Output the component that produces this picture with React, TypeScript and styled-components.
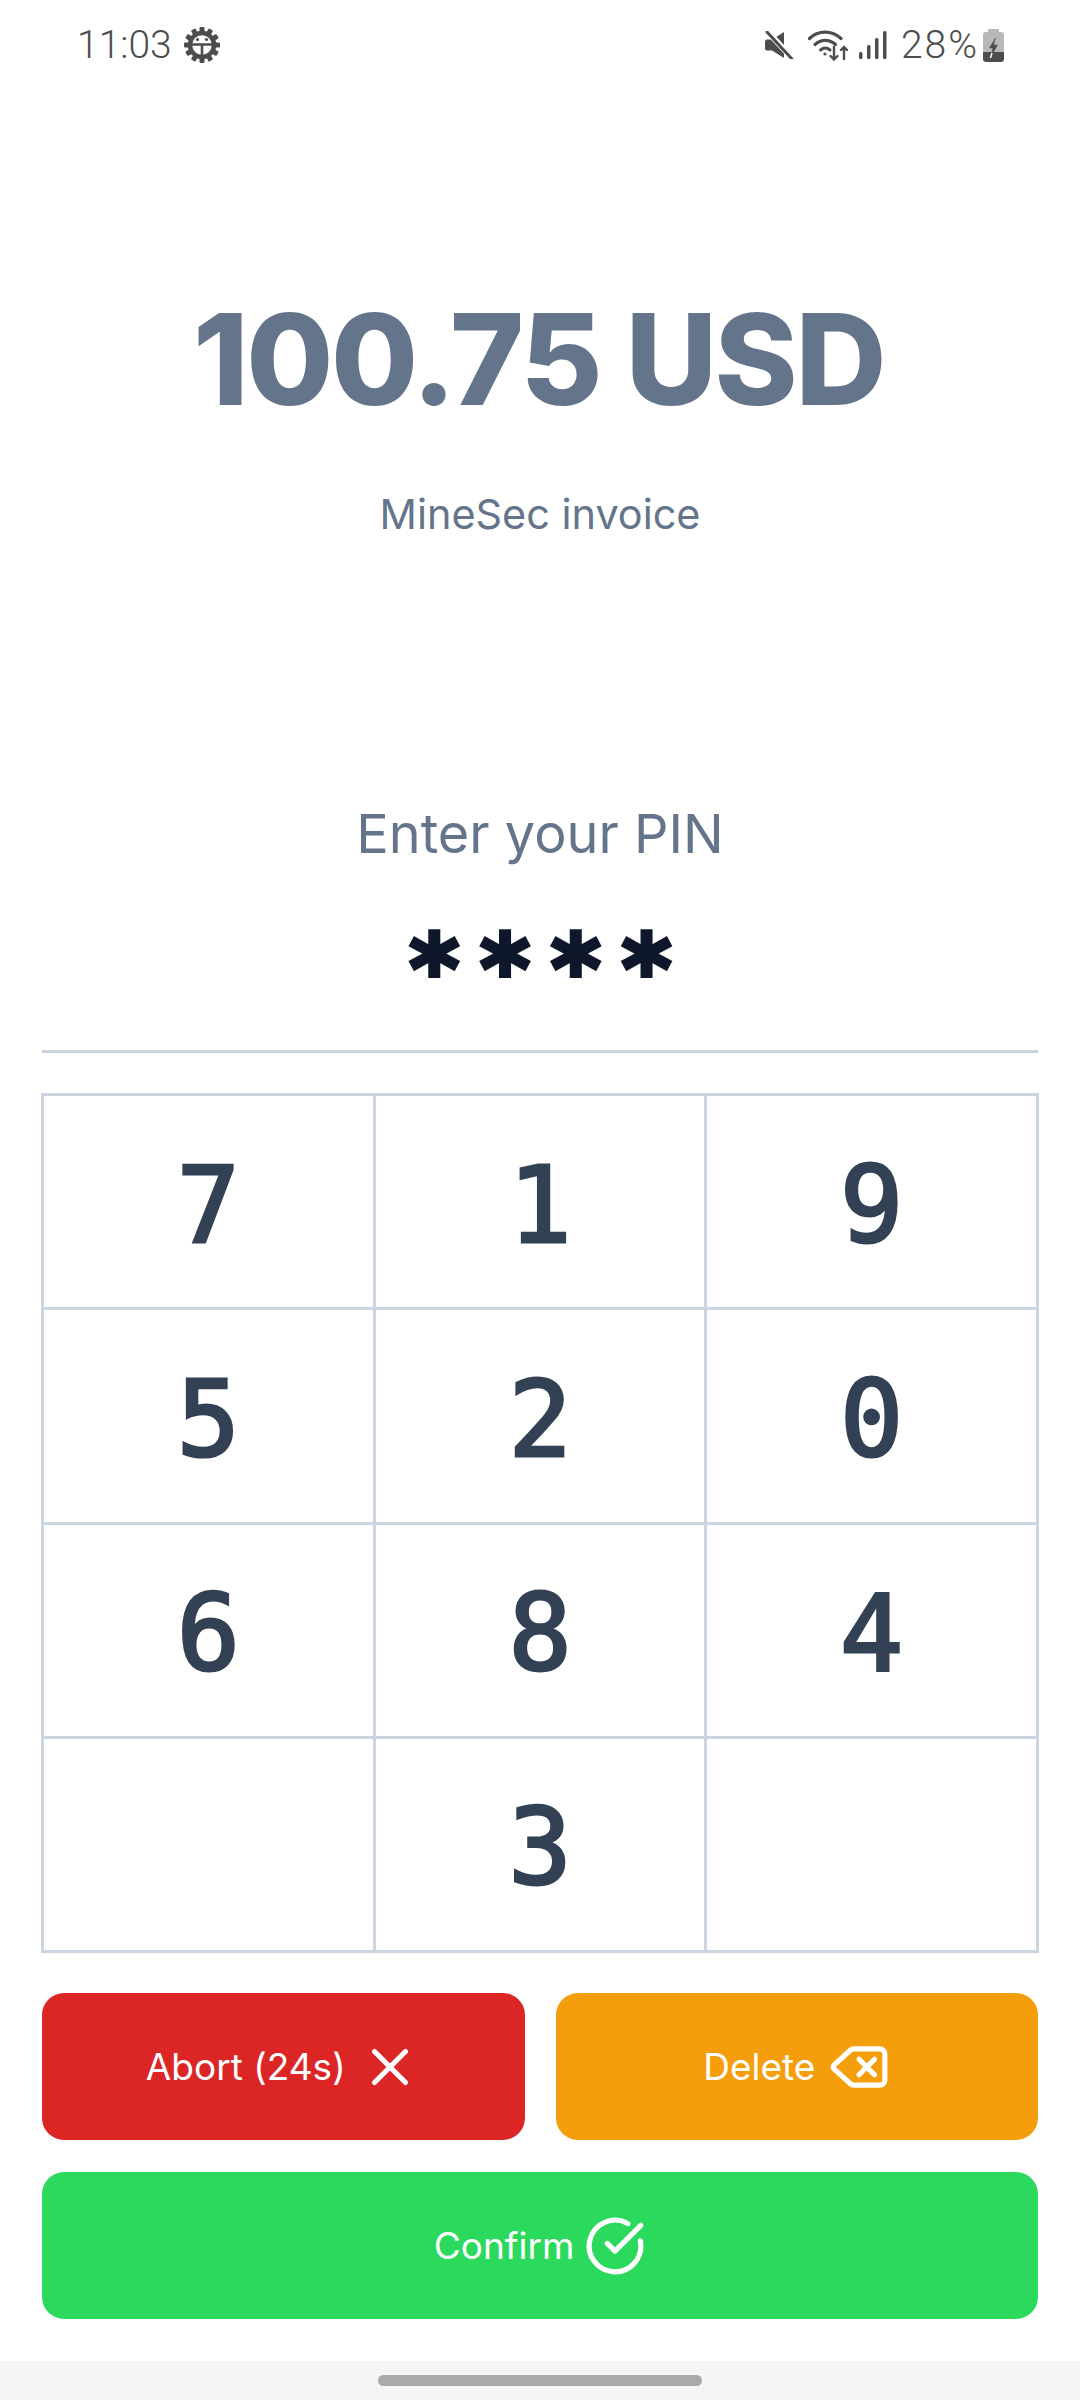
import React from 'react';
import styled, { createGlobalStyle } from 'styled-components';
import { CircleCheckBig, Delete, X } from 'lucide-react';

const GlobalStyle = createGlobalStyle`
  html, body {
    margin: 0;
    padding: 0;
    background: #ffffff;
  }
`;

const Screen = styled.div`
  width: 1080px;
  height: 2400px;
  display: flex;
  flex-direction: column;
  background: #ffffff;
  font-family: Inter, "Liberation Sans", sans-serif;
  overflow: hidden;
`;

const StatusBar = styled.header`
  height: 90px;
  flex: none;
  display: flex;
  align-items: center;
  justify-content: space-between;
  padding: 0 76px 0 77px;
  color: #4d4d4d;
  font-family: Roboto, sans-serif;
  font-weight: 300;
  font-size: 39px;
`;

const StatusGroup = styled.div`
  display: flex;
  align-items: center;
`;

const StatusIcon = styled.svg<{ $left: number }>`
  display: block;
  flex: none;
  margin-left: ${(p) => p.$left}px;
`;

const Percent = styled.span`
  margin-left: 14px;
  letter-spacing: 2px;
`;

const Main = styled.main`
  flex: 1;
  display: flex;
  flex-direction: column;
  padding: 0 42px;
`;

const Amount = styled.h1`
  margin: 206px 0 0;
  padding-right: 3px;
  text-align: center;
  font-size: 126px;
  line-height: 126px;
  font-weight: 800;
  letter-spacing: -2.4px;
  color: #64748b;
`;

const Description = styled.p`
  margin: 62px 0 0;
  text-align: center;
  font-size: 41.4px;
  line-height: 60px;
  color: #64748b;
`;

const Prompt = styled.p`
  margin: 255px 0 0;
  text-align: center;
  font-size: 54px;
  line-height: 70px;
  color: #64748b;
`;

const PinValue = styled.div`
  margin-top: 53px;
  padding-left: 14px;
  height: 77px;
  text-align: center;
  font-family: "DejaVu Sans Mono", monospace;
  font-weight: 700;
  font-size: 96px;
  line-height: 96px;
  letter-spacing: 13px;
  color: #0f172a;
  -webkit-text-stroke: 4px #0f172a;
`;

const Divider = styled.hr`
  margin: 51px 0 0;
  border: 0;
  height: 3px;
  background: #cbd5e1;
`;

const Keypad = styled.div`
  margin: 40px -1px 0;
  display: grid;
  grid-template-columns: repeat(3, 1fr);
  grid-auto-rows: 211.25px;
  gap: 3px;
  padding: 3px;
  background: #cbd5e1;
`;

const Key = styled.div`
  display: flex;
  align-items: center;
  justify-content: center;
  padding-top: 8px;
  box-sizing: border-box;
  background: #ffffff;
  font-family: "DejaVu Sans Mono", monospace;
  font-size: 105px;
  font-weight: 400;
  color: #334155;
  -webkit-text-stroke: 3px #334155;
`;

const Actions = styled.div`
  margin-top: 40px;
  display: grid;
  grid-template-columns: 1fr 1fr;
  gap: 32px 31px;
`;

const ActionButton = styled.button<{ $color: string; $wide?: boolean }>`
  grid-column: ${(p) => (p.$wide ? '1 / -1' : 'auto')};
  height: 147px;
  display: flex;
  align-items: center;
  justify-content: center;
  gap: ${(p) => (p.$wide ? 10 : 13)}px;
  padding: 0;
  border: 0;
  border-radius: 22px;
  background: ${(p) => p.$color};
  color: #ffffff;
  font-family: Inter, sans-serif;
  font-size: 37px;
`;

const NavBar = styled.footer`
  height: 39px;
  flex: none;
  display: flex;
  justify-content: center;
  padding-top: 14px;
  box-sizing: border-box;
  background: #f5f5f5;
`;

const NavPill = styled.div`
  width: 324px;
  height: 11px;
  border-radius: 6px;
  background: #aaaaaa;
`;

const GEAR_TEETH = [0, 30, 60, 90, 120, 150, 180, 210, 240, 270, 300, 330];

const GearBugIcon = () => (
  <StatusIcon $left={12} width="36" height="36" viewBox="0 0 36 36">
    {GEAR_TEETH.map((deg) => (
      <rect key={deg} x="15.5" y="0" width="5" height="6" rx="1" fill="#4d4d4d" transform={`rotate(${deg} 18 18)`} />
    ))}
    <circle cx="18" cy="18" r="12" fill="none" stroke="#4d4d4d" strokeWidth="4.5" />
    <path d="M8 17.5h20M18 17.5V29" stroke="#4d4d4d" strokeWidth="2.6" fill="none" />
    <circle cx="13.5" cy="12.5" r="1.6" fill="#4d4d4d" />
    <circle cx="22.5" cy="12.5" r="1.6" fill="#4d4d4d" />
  </StatusIcon>
);

const MuteIcon = () => (
  <StatusIcon $left={0} width="29" height="28" viewBox="0 0 29 28">
    <path d="M0 10.5a2 2 0 0 1 2-2h5L19 1v26L7 19.5H2a2 2 0 0 1-2-2z" fill="#4d4d4d" />
    <path d="M2 0l26 28" stroke="#ffffff" strokeWidth="6" />
    <path d="M2 1l25 27" stroke="#4d4d4d" strokeWidth="3" strokeLinecap="round" />
  </StatusIcon>
);

const WifiIcon = () => (
  <StatusIcon $left={14} width="41" height="32" viewBox="0 0 41 32" fill="none" stroke="#4d4d4d" strokeLinecap="round">
    <path d="M1.5 9.5C10 1 24 1 33 9.5" strokeWidth="3.2" />
    <path d="M7 15.5c6-5.500 14.500-5.500 20.500 0" strokeWidth="3.2" />
    <path d="M12.500 21c3-2.500 6.500-2.500 9.500 0" strokeWidth="3" />
    <circle cx="17" cy="25" r="1.600" fill="#4d4d4d" stroke="none" />
    <path d="M26 18v12.500M22.500 27l3.500 3.500 3.500-3.500" strokeWidth="2.400" />
    <path d="M36 30V18M33 21l3-3 3 3" strokeWidth="2.400" />
  </StatusIcon>
);

const SignalIcon = () => (
  <StatusIcon $left={10} width="28" height="28" viewBox="0 0 28 28" fill="#4d4d4d">
    <rect x="0" y="21" width="3.500" height="7" rx="1.500" />
    <rect x="8" y="14" width="3.500" height="14" rx="1.500" />
    <rect x="16" y="7" width="3.500" height="21" rx="1.500" />
    <rect x="24" y="0" width="3.500" height="28" rx="1.500" />
  </StatusIcon>
);

const BatteryIcon = () => (
  <StatusIcon $left={4} width="21" height="33" viewBox="0 0 21 33">
    <path d="M6 0h9a1 1 0 0 1 1 1v3H5V1a1 1 0 0 1 1-1z" fill="#b8b8b8" />
    <path d="M3 3h15a3 3 0 0 1 3 3v17H0V6a3 3 0 0 1 3-3z" fill="#b8b8b8" />
    <path d="M0 23h21v7a3 3 0 0 1-3 3H3a3 3 0 0 1-3-3z" fill="#4d4d4d" />
    <path d="M12.500 9L6.500 19h3.500l-2.500 9 7-12h-4z" fill="#4d4d4d" stroke="#4d4d4d" strokeWidth="0.500" />
    <path d="M9 24l-1.500 5" stroke="#ffffff" strokeWidth="1.500" />
  </StatusIcon>
);

const keys = ['7', '1', '9', '5', '2', '0', '6', '8', '4', '', '3', ''];

export default function App() {
  return (
    <Screen>
      <GlobalStyle />
      <StatusBar>
        <StatusGroup>
          <span>11:03</span>
          <GearBugIcon />
        </StatusGroup>
        <StatusGroup>
          <MuteIcon />
          <WifiIcon />
          <SignalIcon />
          <Percent>28%</Percent>
          <BatteryIcon />
        </StatusGroup>
      </StatusBar>

      <Main>
        <Amount>100.75 USD</Amount>
        <Description>MineSec invoice</Description>
        <Prompt>Enter your PIN</Prompt>
        <PinValue>****</PinValue>
        <Divider />
        <Keypad>
          {keys.map((key, i) => (
            <Key key={i}>{key}</Key>
          ))}
        </Keypad>
        <Actions>
          <ActionButton $color="#dc2626">
            Abort (24s)
            <X size={62} strokeWidth={2} />
          </ActionButton>
          <ActionButton $color="#f59e0b">
            Delete
            <Delete size={62} strokeWidth={2} />
          </ActionButton>
          <ActionButton $color="#2bd95c" $wide>
            Confirm
            <CircleCheckBig size={62} strokeWidth={2} />
          </ActionButton>
        </Actions>
      </Main>

      <NavBar>
        <NavPill />
      </NavBar>
    </Screen>
  );
}
